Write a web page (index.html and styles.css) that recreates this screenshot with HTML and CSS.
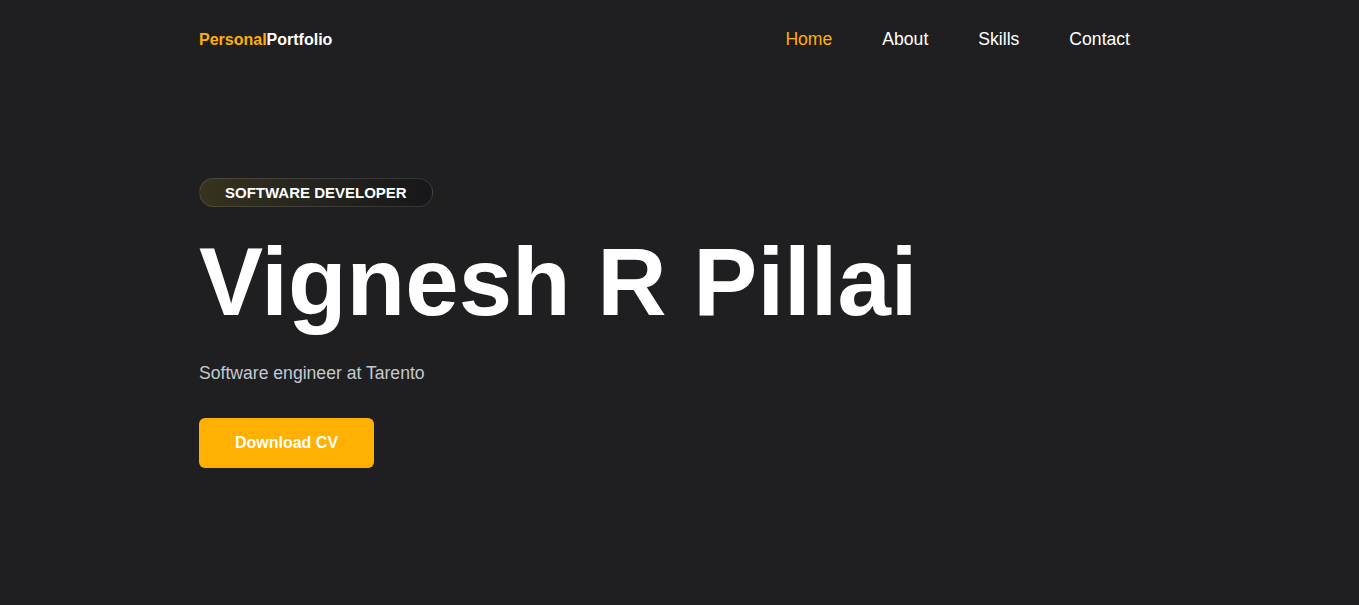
FILE: index.html
```html
<!DOCTYPE html>
<html lang="en">
<head>
<meta charset="utf-8">
<title>Vignesh R Pillai</title>
<link rel="stylesheet" href="styles.css">
</head>
<body>
<div class="container">
  <header class="nav">
    <a class="logo" href="#"><span class="accent">Personal</span>Portfolio</a>
    <nav class="links">
      <a class="active" href="#">Home</a>
      <a href="#">About</a>
      <a href="#">Skills</a>
      <a href="#">Contact</a>
    </nav>
  </header>
  <section class="hero">
    <span class="badge">SOFTWARE DEVELOPER</span>
    <h1 class="title">Vignesh R Pillai</h1>
    <p class="subtitle">Software engineer at Tarento</p>
    <a class="btn" href="#">Download CV</a>
  </section>
</div>
</body>
</html>
```
FILE: styles.css
```css
* { box-sizing: border-box; }
html, body { margin: 0; padding: 0; }
body {
  background: #1f1f21;
  color: #fff;
  font-family: "Liberation Sans", Arial, sans-serif;
  height: 605px;
  overflow: hidden;
}
a { text-decoration: none; color: inherit; }
.container {
  width: 961px;
  margin: 0 auto;
}
.nav {
  display: flex;
  align-items: center;
  justify-content: space-between;
  height: 79px;
  padding-right: 30px;
}
.logo {
  font-size: 16px;
  font-weight: 700;
  color: #fff;
}
.logo .accent { color: #ffb000; }
.links {
  display: flex;
  gap: 50px;
}
.links a {
  font-size: 17.6px;
  color: #fff;
}
.links a.active { color: #ffb000; }
.hero {
  padding-top: 99px;
  display: flex;
  flex-direction: column;
  align-items: flex-start;
}
.badge {
  display: inline-flex;
  align-items: center;
  height: 29px;
  padding: 0 25px;
  border-radius: 15px;
  border: 1px solid rgba(255,255,255,0.12);
  background: linear-gradient(90deg, #37331f 0%, #26251f 45%, #17171a 100%);
  font-size: 15px;
  font-weight: 700;
  color: #fff;
}
.title {
  margin: 20px 0 0;
  font-size: 96px;
  font-weight: 700;
  line-height: 110px;
  color: #fff;
}
.subtitle {
  margin: 26px 0 0;
  font-size: 17.6px;
  color: #c3c9d1;
}
.btn {
  margin-top: 34px;
  display: inline-flex;
  align-items: center;
  justify-content: center;
  width: 175px;
  height: 50px;
  border-radius: 6px;
  background: #ffb000;
  color: #fff;
  font-size: 16px;
  font-weight: 700;
}
```
